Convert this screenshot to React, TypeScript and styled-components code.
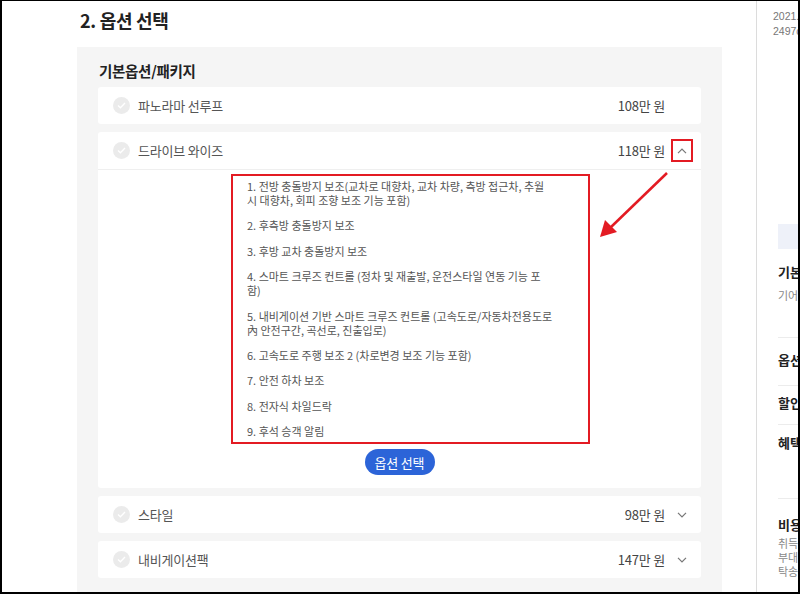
import React from "react";
import styled, { createGlobalStyle } from "styled-components";

const Global = createGlobalStyle`
  html, body { margin: 0; padding: 0; background: #fff; }
  body { font-family: "Noto Sans CJK KR", "Noto Sans", sans-serif; }
  * { box-sizing: border-box; }
`;

const Frame = styled.div`
  position: relative;
  width: 800px;
  height: 594px;
  border: 2px solid #000;
  border-top-width: 1px;
  display: flex;
  overflow: hidden;
  background: #fff;
`;

const Main = styled.div`
  width: 754px;
  flex: none;
  padding: 7px 0 0 75px;
`;

const Title = styled.h2`
  margin: 0 0 15px 3px;
  font-size: 18px;
  line-height: 24px;
  font-weight: 700;
  color: #222;
  letter-spacing: -0.3px;
`;

const Panel = styled.div`
  width: 645px;
  background: #f5f5f5;
  padding: 14px 21px 30px;
`;

const SubTitle = styled.h3`
  margin: 0 0 6px 1px;
  font-size: 14.5px;
  line-height: 20px;
  font-weight: 700;
  color: #222;
  letter-spacing: -0.3px;
`;

const Rows = styled.div`
  display: flex;
  flex-direction: column;
  gap: 8px;
`;

const Card = styled.div`
  background: #fff;
  border-radius: 3px;
`;

const Header = styled.div`
  height: 37px;
  display: flex;
  align-items: center;
  padding: 0 8px 0 15px;
`;

const CheckCircle = styled.span`
  width: 17px;
  height: 17px;
  border-radius: 50%;
  background: #ebebeb;
  display: inline-flex;
  align-items: center;
  justify-content: center;
  flex: none;
`;

const Name = styled.span`
  margin-left: 8px;
  font-size: 13px;
  color: #555;
  flex: 1;
  letter-spacing: -0.2px;
`;

const Price = styled.span`
  font-size: 13px;
  color: #444;
  letter-spacing: -0.2px;
`;

const ChevronBox = styled.span<{ $marked?: boolean }>`
  width: 22px;
  height: 23px;
  margin-left: 6px;
  display: inline-flex;
  align-items: center;
  justify-content: center;
  border: 2px solid ${(p) => (p.$marked ? "#e31b23" : "transparent")};
`;

const Body = styled.div`
  border-top: 1px solid #efefef;
  padding: 4px 0 13px;
  display: flex;
  flex-direction: column;
  align-items: center;
`;

const FeatureBox = styled.ol`
  align-self: flex-start;
  margin: 0 0 0 133px;
  width: 359px;
  border: 2px solid #e31b23;
  padding: 3px 14px 4px 14px;
  list-style: none;
  display: flex;
  flex-direction: column;
  gap: 11.4px;
`;

const Feature = styled.li`
  font-size: 11px;
  line-height: 14px;
  color: #555;
  white-space: nowrap;
`;

const SelectButton = styled.button`
  margin-top: 5px;
  width: 70px;
  height: 26px;
  border: none;
  border-radius: 13px;
  background: #2c64d8;
  color: #fff;
  font-family: inherit;
  font-size: 13px;
  padding: 0;
  letter-spacing: -0.2px;
`;

const Sidebar = styled.aside`
  flex: 1;
  border-left: 1px solid #dcdcdc;
  padding: 8px 0 0 16px;
  overflow: hidden;
  white-space: nowrap;
`;

const Meta = styled.div`
  font-family: "Liberation Sans", Arial, sans-serif;
  font-size: 10.5px;
  line-height: 15px;
  color: #777;
`;

const BlueBox = styled.div`
  margin: 185px 0 0 5px;
  height: 25px;
  background: #eef1f9;
`;

const Section = styled.div<{ $pt: number; $h: number; $line?: boolean }>`
  margin-left: 5px;
  padding-top: ${(p) => p.$pt}px;
  height: ${(p) => p.$h}px;
  border-top: 1px solid ${(p) => (p.$line ? "#ececec" : "transparent")};
`;

const SideHead = styled.div`
  font-size: 13px;
  line-height: 17px;
  font-weight: 700;
  color: #222;
`;

const SideText = styled.div<{ $mt?: number }>`
  margin-top: ${(p) => p.$mt ?? 0}px;
  font-size: 11px;
  line-height: 14px;
  color: #888;
`;

const Arrow = styled.svg`
  position: absolute;
  left: 590px;
  top: 165px;
  pointer-events: none;
`;

const Check = () => (
  <svg width="9" height="7" viewBox="0 0 9 7">
    <polyline points="1,3.6 3.4,5.8 8,1" fill="none" stroke="#fff" strokeWidth="1.3" />
  </svg>
);

const Chevron = ({ up }: { up?: boolean }) => (
  <svg width="10" height="6" viewBox="0 0 10 6">
    <polyline
      points={up ? "1,5.2 5,1 9,5.2" : "1,0.8 5,5 9,0.8"}
      fill="none"
      stroke="#777"
      strokeWidth="1.2"
    />
  </svg>
);

type Opt = { name: string; price: string; chevron: "none" | "up" | "down" };

const features: string[][] = [
  ["1. 전방 충돌방지 보조(교차로 대향차, 교차 차량, 측방 접근차, 추월", "시 대향차, 회피 조향 보조 기능 포함)"],
  ["2. 후측방 충돌방지 보조"],
  ["3. 후방 교차 충돌방지 보조"],
  ["4. 스마트 크루즈 컨트롤 (정차 및 재출발, 운전스타일 연동 기능 포", "함)"],
  ["5. 내비게이션 기반 스마트 크루즈 컨트롤 (고속도로/자동차전용도로", "內 안전구간, 곡선로, 진출입로)"],
  ["6. 고속도로 주행 보조 2 (차로변경 보조 기능 포함)"],
  ["7. 안전 하차 보조"],
  ["8. 전자식 차일드락"],
  ["9. 후석 승객 알림"],
];

const OptionHeader = ({ o, marked }: { o: Opt; marked?: boolean }) => (
  <Header>
    <CheckCircle>
      <Check />
    </CheckCircle>
    <Name>{o.name}</Name>
    <Price>{o.price}</Price>
    <ChevronBox $marked={marked}>
      {o.chevron !== "none" && <Chevron up={o.chevron === "up"} />}
    </ChevronBox>
  </Header>
);

export default function App() {
  return (
    <>
      <Global />
      <Frame>
        <Main>
          <Title>2. 옵션 선택</Title>
          <Panel>
            <SubTitle>기본옵션/패키지</SubTitle>
            <Rows>
              <Card>
                <OptionHeader o={{ name: "파노라마 선루프", price: "108만 원", chevron: "none" }} />
              </Card>
              <Card>
                <OptionHeader o={{ name: "드라이브 와이즈", price: "118만 원", chevron: "up" }} marked />
                <Body>
                  <FeatureBox>
                    {features.map((lines, i) => (
                      <Feature key={i}>
                        {lines.map((l, j) => (
                          <React.Fragment key={j}>
                            {j > 0 && <br />}
                            {l}
                          </React.Fragment>
                        ))}
                      </Feature>
                    ))}
                  </FeatureBox>
                  <SelectButton>옵션 선택</SelectButton>
                </Body>
              </Card>
              <Card>
                <OptionHeader o={{ name: "스타일", price: "98만 원", chevron: "down" }} />
              </Card>
              <Card>
                <OptionHeader o={{ name: "내비게이션팩", price: "147만 원", chevron: "down" }} />
              </Card>
            </Rows>
          </Panel>
        </Main>
        <Sidebar>
          <Meta>2021.07 출시</Meta>
          <Meta>2497cc · 가솔린</Meta>
          <BlueBox />
          <Section $pt={13} $h={88}>
            <SideHead>기본가격</SideHead>
            <SideText $mt={8}>기어 자동 8단</SideText>
          </Section>
          <Section $pt={13} $h={48} $line>
            <SideHead>옵션가격</SideHead>
          </Section>
          <Section $pt={8} $h={39} $line>
            <SideHead>할인</SideHead>
          </Section>
          <Section $pt={9} $h={74} $line>
            <SideHead>혜택</SideHead>
          </Section>
          <Section $pt={17} $h={120} $line>
            <SideHead>비용</SideHead>
            <SideText $mt={3}>취득세</SideText>
            <SideText>부대비용</SideText>
            <SideText>탁송료</SideText>
          </Section>
        </Sidebar>
        <Arrow width="90" height="80" viewBox="0 0 90 80">
          <line x1="75" y1="7" x2="18" y2="62" stroke="#e31b23" strokeWidth="2.5" />
          <polygon points="8,71 13,54 25,66" fill="#e31b23" />
        </Arrow>
      </Frame>
    </>
  );
}
